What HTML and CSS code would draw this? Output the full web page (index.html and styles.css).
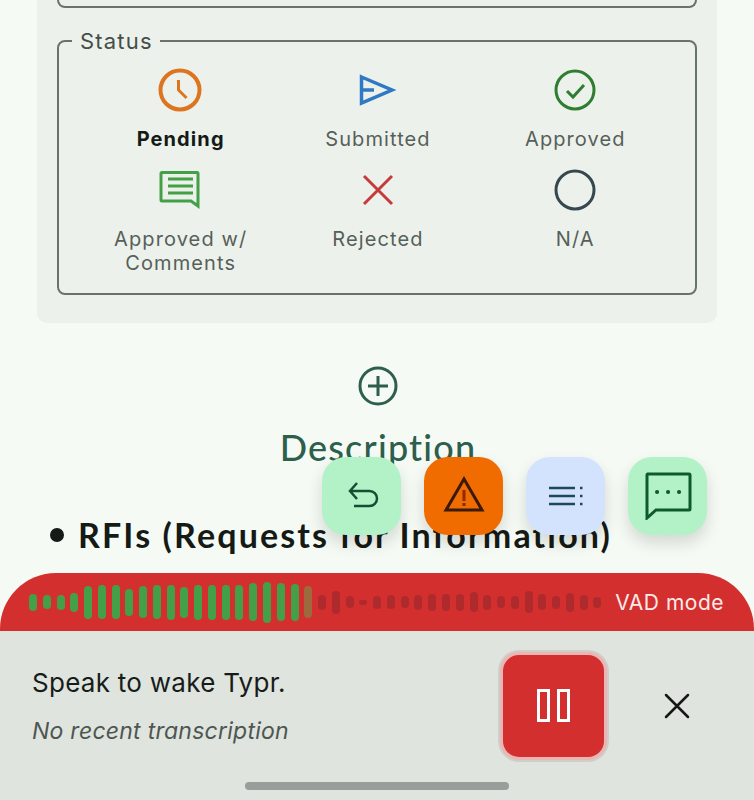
FILE: index.html
```html
<!DOCTYPE html>
<html lang="en">
<head>
    <meta charset="UTF-8">
    <meta name="viewport" content="width=device-width, initial-scale=1.0">
    <title>Status</title>
    <link rel="stylesheet" href="styles.css">
</head>
<body>
    <div class="page">
        <div class="card">
            <div class="top-box"></div>
            <fieldset class="status-box">
                <legend>Status</legend>
                <div class="status-grid">
                    <div class="status-item active">
                        <svg class="status-icon" viewBox="0 0 48 48" fill="none" stroke="#dd7420" stroke-width="4">
                            <circle cx="23" cy="24" r="19.500"/>
                            <path d="M21.500 14v10l8 8" stroke-width="3"/>
                        </svg>
                        <span>Pending</span>
                    </div>
                    <div class="status-item">
                        <svg class="status-icon" viewBox="0 0 48 48" fill="none" stroke="#2f78c4" stroke-width="3.500">
                            <path d="M7.500 11L38 24 7.500 37zM7.500 24H20"/>
                        </svg>
                        <span>Submitted</span>
                    </div>
                    <div class="status-item">
                        <svg class="status-icon" viewBox="0 0 48 48" fill="none" stroke="#2e7d32" stroke-width="3">
                            <circle cx="24" cy="24" r="19"/>
                            <path d="M16 25l6 6 11-12"/>
                        </svg>
                        <span>Approved</span>
                    </div>
                    <div class="status-item">
                        <svg class="status-icon" viewBox="0 0 48 48" fill="none" stroke="#43a047" stroke-width="3">
                            <path d="M5 6.500h35a1 1 0 0 1 1 1V40l-7-5H5a1 1 0 0 1-1-1V7.500a1 1 0 0 1 1-1z"/>
                            <path d="M11 13h25M11 20h25M11 27h25"/>
                        </svg>
                        <span>Approved w/ Comments</span>
                    </div>
                    <div class="status-item">
                        <svg class="status-icon" viewBox="0 0 48 48" fill="none" stroke="#c73a3a" stroke-width="3">
                            <path d="M10 10l28 28M38 10L10 38"/>
                        </svg>
                        <span>Rejected</span>
                    </div>
                    <div class="status-item">
                        <svg class="status-icon" viewBox="0 0 48 48" fill="none" stroke="#37474f" stroke-width="3">
                            <circle cx="24" cy="24" r="19"/>
                        </svg>
                        <span>N/A</span>
                    </div>
                </div>
            </fieldset>
        </div>

        <div class="add-row">
            <svg class="add-icon" viewBox="0 0 40 40" fill="none" stroke="#2d5f4c" stroke-width="3">
                <circle cx="20" cy="20" r="18"/>
                <path d="M20 10v20M10 20h20"/>
            </svg>
        </div>
        <h2 class="section-title">Description</h2>
        <ul class="desc-list">
            <li>RFIs (Requests for Information)</li>
        </ul>
    </div>

    <div class="fab-row">
        <button class="fab fab-green">
            <svg viewBox="0 0 36 36" fill="none" stroke="#0f5132" stroke-width="2.500">
                <path d="M13 5l-7 8 7 8M6 13h19.500a7.500 7.500 0 0 1 0 15H10"/>
            </svg>
        </button>
        <button class="fab fab-orange">
            <svg viewBox="0 0 44 44" fill="none" stroke="#3a1a05" stroke-width="3">
                <path d="M22 5L4 36h36z"/>
                <path d="M22 16v11" stroke="#8a2c05"/>
                <path d="M22 29v3" stroke="#8a2c05"/>
            </svg>
        </button>
        <button class="fab fab-blue">
            <svg viewBox="0 0 36 36" fill="none" stroke="#1d4a5a" stroke-width="2.500">
                <path d="M1 10h26M1 18h26M1 26h26M32 10h2.500M32 18h2.500M32 26h2.500"/>
            </svg>
        </button>
        <button class="fab fab-green">
            <svg viewBox="0 0 48 48" fill="none" stroke="#0d5a2c" stroke-width="3">
                <path d="M3 2h42a1 1 0 0 1 1 1v34a1 1 0 0 1-1 1H12l-9 8V3a1 1 0 0 1 1-1z"/>
                <path d="M13 20h.100M24 20h.100M35 20h.100" stroke-width="4" stroke-linecap="round"/>
            </svg>
        </button>
    </div>

    <div class="dock">
        <div class="vad-bar">
            <div class="wave">
                <i class="bar live" style="height:17px"></i>
                <i class="bar live" style="height:14px"></i>
                <i class="bar live" style="height:15px"></i>
                <i class="bar live" style="height:19px"></i>
                <i class="bar live" style="height:33px"></i>
                <i class="bar live" style="height:34px"></i>
                <i class="bar live" style="height:34px"></i>
                <i class="bar live" style="height:27px"></i>
                <i class="bar live" style="height:32px"></i>
                <i class="bar live" style="height:34px"></i>
                <i class="bar live" style="height:35px"></i>
                <i class="bar live" style="height:31px"></i>
                <i class="bar live" style="height:35px"></i>
                <i class="bar live" style="height:35px"></i>
                <i class="bar live" style="height:35px"></i>
                <i class="bar live" style="height:35px"></i>
                <i class="bar live" style="height:38px"></i>
                <i class="bar live" style="height:41px"></i>
                <i class="bar live" style="height:38px"></i>
                <i class="bar live" style="height:37px"></i>
                <i class="bar fading" style="height:32px"></i>
                <i class="bar" style="height:15px"></i>
                <i class="bar" style="height:23px"></i>
                <i class="bar" style="height:12px"></i>
                <i class="bar" style="height:5px"></i>
                <i class="bar" style="height:13px"></i>
                <i class="bar" style="height:14px"></i>
                <i class="bar" style="height:12px"></i>
                <i class="bar" style="height:15px"></i>
                <i class="bar" style="height:17px"></i>
                <i class="bar" style="height:17px"></i>
                <i class="bar" style="height:17px"></i>
                <i class="bar" style="height:20px"></i>
                <i class="bar" style="height:15px"></i>
                <i class="bar" style="height:12px"></i>
                <i class="bar" style="height:13px"></i>
                <i class="bar" style="height:22px"></i>
                <i class="bar" style="height:16px"></i>
                <i class="bar" style="height:13px"></i>
                <i class="bar" style="height:19px"></i>
                <i class="bar" style="height:15px"></i>
                <i class="bar" style="height:11px"></i>
            </div>
            <span class="vad-label">VAD mode</span>
        </div>
        <div class="sheet">
            <div class="sheet-text">
                <div class="wake-text">Speak to wake Typr.</div>
                <div class="recent-text">No recent transcription</div>
            </div>
            <button class="pause-btn">
                <svg viewBox="0 0 33 33" fill="none" stroke="#fff" stroke-width="3">
                    <path d="M1.500 1.500h10v30h-10zM21.500 1.500h10v30h-10z"/>
                </svg>
            </button>
            <button class="close-btn">
                <svg viewBox="0 0 26 26" fill="none" stroke="#151815" stroke-width="2.500" stroke-linecap="round">
                    <path d="M2 2l22 22M24 2L2 24"/>
                </svg>
            </button>
        </div>
        <div class="home-indicator"></div>
    </div>
</body>
</html>
```

FILE: styles.css
```css
body {
    margin: 0;
    width: 754px;
    height: 800px;
    overflow: hidden;
    position: relative;
    background-color: #f5fbf4;
    font-family: Inter, "Liberation Sans", sans-serif;
}
.page {
    height: 800px;
    overflow: hidden;
}
.card {
    margin: 0 37px;
    padding: 0 20px 28px;
    background-color: #ecf2eb;
    border-radius: 0 0 10px 10px;
}
.top-box {
    height: 6px;
    border: 2px solid #68736c;
    border-top: none;
    border-radius: 0 0 8px 8px;
}
.status-box {
    margin: 20px 0 0;
    padding: 0 21px 18px 23px;
    min-width: 0;
    border: 2px solid #68736c;
    border-radius: 8px;
}
.status-box legend {
    margin-left: -10px;
    padding: 0 7px 0 8px;
    font-size: 22px;
    line-height: 26px;
    letter-spacing: 1.2px;
    color: #454e49;
}
.status-grid {
    display: grid;
    grid-template-columns: repeat(3, 1fr);
    grid-template-rows: 100px auto;
    margin-top: 12px;
}
.status-item {
    display: flex;
    flex-direction: column;
    align-items: center;
    text-align: center;
    font-size: 20px;
    line-height: 24px;
    letter-spacing: 1.1px;
    color: #575f5a;
}
.status-item span {
    display: block;
    width: 150px;
    margin-top: 13px;
}
.status-item.active {
    font-weight: 700;
    color: #141a16;
}
.status-icon {
    width: 48px;
    height: 48px;
    flex-shrink: 0;
}
.add-row {
    display: flex;
    justify-content: center;
    margin-top: 43px;
    padding-left: 2px;
}
.add-icon {
    width: 40px;
    height: 40px;
}
.section-title {
    margin: 19px 0 0;
    padding-left: 2px;
    text-align: center;
    font-size: 36px;
    line-height: 44px;
    font-weight: 500;
    color: #2d5f4c;
    font-family: Lato, sans-serif;
    letter-spacing: 1.2px;
}
.desc-list {
    margin: 46px 0 0;
    padding: 0 0 0 50px;
    list-style: none;
    font-family: Lato, sans-serif;
    font-size: 34px;
    line-height: 40px;
    font-weight: 700;
    letter-spacing: 2.130px;
    color: #151a16;
}
.desc-list li {
    display: flex;
    align-items: center;
    gap: 14px;
    white-space: nowrap;
}
.desc-list li::before {
    content: "";
    width: 14px;
    height: 14px;
    border-radius: 50%;
    background-color: #151a16;
}
.fab-row {
    position: absolute;
    top: 457px;
    right: 47px;
    display: flex;
    gap: 23px;
}
.fab {
    display: flex;
    align-items: center;
    justify-content: center;
    width: 79px;
    height: 78px;
    padding: 0;
    border: none;
    border-radius: 24px;
    box-shadow: 0 8px 16px rgba(0, 0, 0, 0.14);
}
.fab svg {
    width: 36px;
    height: 36px;
}
.fab-orange svg {
    width: 44px;
    height: 44px;
}
.fab-row .fab:last-child svg {
    width: 48px;
    height: 48px;
}
.fab-green {
    background-color: #b3f2c6;
}
.fab-orange {
    background-color: #f06c00;
}
.fab-blue {
    background-color: #d3e3fd;
}
.dock {
    position: absolute;
    left: 0;
    right: 0;
    bottom: 0;
}
.vad-bar {
    display: flex;
    align-items: center;
    justify-content: space-between;
    height: 58px;
    padding: 0 30px 0 29px;
    background-color: #d32f2f;
    border-radius: 56px 56px 0 0;
}
.wave {
    display: flex;
    align-items: center;
    gap: 5.780px;
}
.bar {
    width: 8px;
    border-radius: 4px;
    background-color: #ae2a2c;
}
.bar.live {
    background-color: #43a047;
}
.bar.fading {
    background-color: #9c6a3c;
}
.vad-label {
    font-size: 21px;
    letter-spacing: 0.5px;
    color: #fbeaea;
}
.sheet {
    display: flex;
    align-items: center;
    height: 169px;
    box-sizing: border-box;
    padding: 22px 64px 42px 32px;
    background-color: #dfe4df;
}
.sheet-text {
    flex: 1;
}
.wake-text {
    font-size: 26px;
    line-height: 32px;
    letter-spacing: 0.27px;
    color: #181c19;
}
.recent-text {
    margin-top: 18px;
    font-size: 23px;
    line-height: 28px;
    letter-spacing: 0.25px;
    font-style: italic;
    color: #4e5650;
}
.pause-btn {
    display: flex;
    align-items: center;
    justify-content: center;
    width: 101px;
    height: 102px;
    margin-right: 60px;
    padding: 0;
    border: none;
    border-radius: 16px;
    background-color: #d32f2f;
    box-shadow: 0 0 0 3px #ecb4b2, 0 0 0 5px #cfcfca;
}
.pause-btn svg {
    width: 33px;
    height: 33px;
}
.close-btn {
    width: 26px;
    height: 26px;
    padding: 0;
    border: none;
    background: none;
}
.close-btn svg {
    display: block;
    width: 26px;
    height: 26px;
}
.home-indicator {
    position: absolute;
    left: 245px;
    bottom: 10px;
    width: 264px;
    height: 8px;
    border-radius: 4px;
    background-color: #9a9e9a;
}
```
